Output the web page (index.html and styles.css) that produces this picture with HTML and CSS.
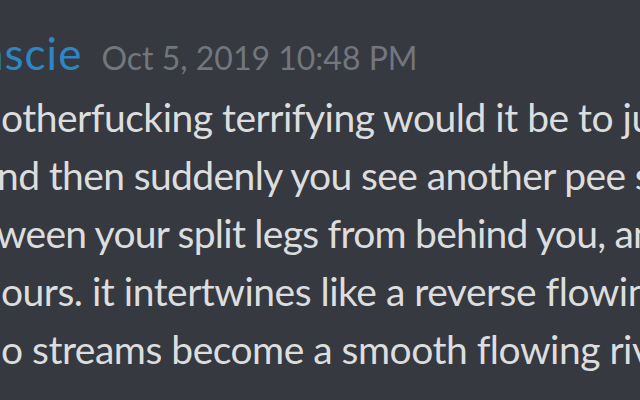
FILE: index.html
```html
<!DOCTYPE html>
<html>
<head>
<meta charset="utf-8">
<link rel="stylesheet" href="styles.css">
</head>
<body>
<div class="message">
  <div class="header">
    <span class="username">nscie</span>
    <span class="timestamp">Oct 5, 2019 10:48 PM</span>
  </div>
  <div class="content">
    <div class="line l1">otherfucking terrifying would it be to just</div>
    <div class="line l2">nd then suddenly you see another pee stream</div>
    <div class="line l3">ween your split legs from behind you, and</div>
    <div class="line l4">ours. it intertwines like a reverse flowing</div>
    <div class="line l5">o streams become a smooth flowing river</div>
  </div>
</div>
</body>
</html>
```
FILE: styles.css
```css
html, body {
  margin: 0;
  padding: 0;
  background: #36393f;
  overflow: hidden;
}
.message {
  width: 640px;
  height: 400px;
  overflow: hidden;
  padding-top: 28px;
  box-sizing: border-box;
  font-family: "Lato", "Open Sans", sans-serif;
}
.header {
  display: flex;
  align-items: baseline;
  gap: 19px;
  height: 50px;
  line-height: 50px;
  white-space: nowrap;
  margin-left: -21px;
}
.username {
  color: #2d87c4;
  font-size: 44px;
  letter-spacing: 1px;
}
.timestamp {
  color: #72767d;
  font-size: 32px;
}
.content {
  margin-top: 10px;
  color: #dcddde;
  font-size: 39px;
  line-height: 58px;
  letter-spacing: -0.5px;
}
.line {
  white-space: nowrap;
}
.l1 { margin-left: 1px; }
.l2 { margin-left: -3px; letter-spacing: -0.62px; }
.l3 { margin-left: -4px; letter-spacing: -0.75px; }
.l4 { margin-left: 1px; }
.l5 { margin-left: 1px; }
```
